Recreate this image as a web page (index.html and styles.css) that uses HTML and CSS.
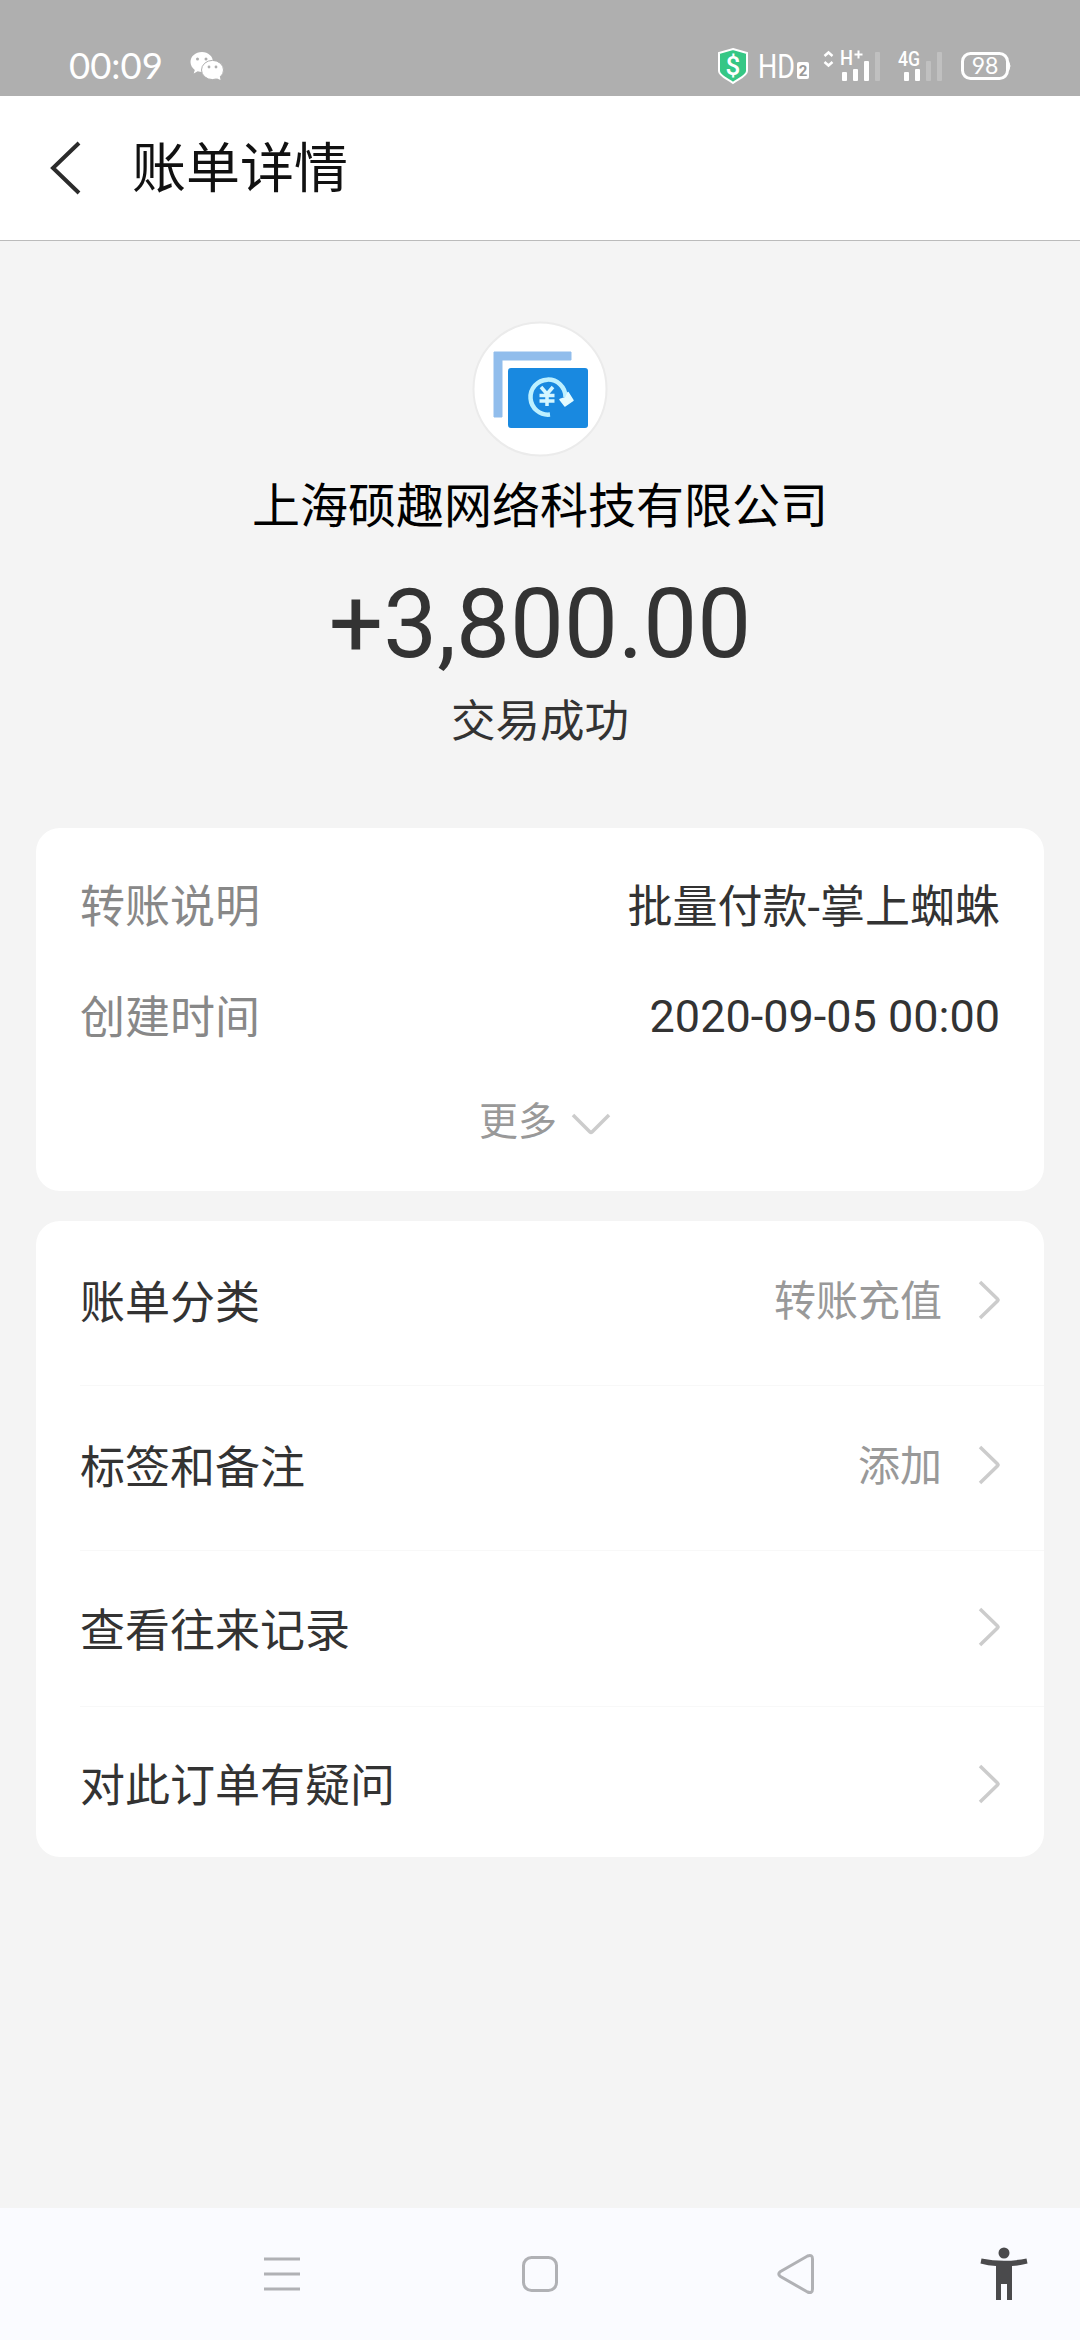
FILE: index.html
```html
<!DOCTYPE html>
<html lang="zh-CN">
<head>
<meta charset="utf-8">
<title>账单详情</title>
<link rel="stylesheet" href="styles.css">
</head>
<body>
<div class="screen">
  <div class="statusbar">
    <span class="clock">00:09</span>
    <svg class="wechat" width="34" height="30" viewBox="0 0 34 30">
      <path fill="#fff" d="M12 1C5.400 1 .5 5.400 .5 11c0 3.200 1.700 6 4.300 7.900L3.700 22.500l4-2.200c1.400.4 2.900.7 4.300.7C18 21 23 16.600 23 11S18.200 1 12 1z"/>
      <ellipse cx="22.500" cy="19" rx="11" ry="9.600" fill="#fff" stroke="#afafaf" stroke-width="1"/>
      <path fill="#fff" d="M26 27l4.500 2-.7-4z"/>
      <g fill="#afafaf"><circle cx="7.500" cy="8" r="1.500"/><circle cx="16" cy="8" r="1.500"/><circle cx="19" cy="16" r="1.400"/><circle cx="26" cy="16" r="1.400"/></g>
    </svg>
    <svg class="indicators" width="300" height="42" viewBox="715 44 300 42">
      <path d="M733 49l14 4v18c0 5-9 8-14 12-5-4-14-7-14-12V53z" fill="#35c785" stroke="#fff" stroke-width="2"/>
      <text class="ind-money" x="733" y="75" text-anchor="middle">$</text>
      <text class="ind-hd" x="758" y="78" textLength="37" lengthAdjust="spacingAndGlyphs">HD</text>
      <rect x="797" y="62" width="12" height="17" rx="2" fill="#fff"/>
      <text class="ind-two" x="803" y="76" text-anchor="middle">2</text>
      <path d="M824.500 56l4-3.500 4 3.500M824.500 62l4 3.500 4-3.500" fill="none" stroke="#fff" stroke-width="2.500"/>
      <text class="ind-net" x="840" y="65" textLength="13" lengthAdjust="spacingAndGlyphs">H</text>
      <path d="M858.500 50.500v8M854.500 54.500h8" stroke="#fff" stroke-width="2"/>
      <g fill="#fff"><rect x="842" y="72" width="5" height="9" rx="1"/><rect x="853" y="69" width="5" height="12" rx="1"/><rect x="864" y="61" width="5" height="20" rx="1"/><rect x="904" y="72" width="5" height="9" rx="1"/><rect x="915" y="69" width="5" height="12" rx="1"/></g>
      <g fill="#c0c0c0"><rect x="875" y="52" width="5" height="29" rx="1"/><rect x="926" y="61" width="5" height="20" rx="1"/><rect x="937" y="52" width="5" height="29" rx="1"/></g>
      <text class="ind-net" x="898" y="66" textLength="22" lengthAdjust="spacingAndGlyphs">4G</text>
      <rect x="962.500" y="53.500" width="45" height="25" rx="8" fill="none" stroke="#fff" stroke-width="3"/>
      <path d="M1008.500 61q3 5 0 10z" fill="#fff" stroke="#fff"/>
      <text class="ind-bat" x="985" y="73.500" text-anchor="middle">98</text>
    </svg>
  </div>
  <div class="header">
    <svg class="back" width="34" height="54" viewBox="0 0 34 54"><path d="M30 2L4 27 30 52" fill="none" stroke="#2b2b2b" stroke-width="4"/></svg>
    <h1 class="title">账单详情</h1>
  </div>
  <div class="content">
    <div class="summary">
      <svg class="logo" width="136" height="136" viewBox="0 0 136 136">
        <circle cx="68" cy="68" r="66.500" fill="#fff" stroke="#ebebeb" stroke-width="2"/>
        <path d="M22 96V31h77v8H30v57z" fill="#91bdec" stroke="#91bdec" stroke-width="1" stroke-linejoin="round"/>
        <rect x="36" y="47" width="80" height="60" rx="3" fill="#1989e0"/>
        <path d="M78 93.500A17.500 17.500 0 1 1 93.500 76" fill="none" stroke="#bdf0ff" stroke-width="4.500"/>
        <path d="M88 78.500l6-2 2-5 5 8-8 5.500z" fill="#e4fbff" stroke="#e4fbff" stroke-width="1.500" stroke-linejoin="round"/>
        <path d="M69 66l6 7 6-7M75 73v12M67.500 74.500h15M67.500 80h15" fill="none" stroke="#d4f6ff" stroke-width="3.500"/>
      </svg>
      <div class="company">上海硕趣网络科技有限公司</div>
      <div class="amount">+3,800.00</div>
      <div class="state">交易成功</div>
    </div>
    <div class="card details">
      <div class="detail"><span class="key">转账说明</span><span class="value">批量付款-掌上蜘蛛</span></div>
      <div class="detail"><span class="key">创建时间</span><span class="value value-time">2020-09-05 00:00</span></div>
      <div class="more"><span>更多</span><svg width="40" height="24" viewBox="0 0 40 24"><path d="M2 3l17 17q1 1 2 0L38 3" fill="none" stroke="#ccc" stroke-width="3.500"/></svg></div>
    </div>
    <div class="card links">
      <div class="link link-first"><span class="label">账单分类</span><span class="extra">转账充值</span><svg class="arrow" width="22" height="40" viewBox="0 0 22 40"><path d="M2 2l17.500 17q1 1 0 2L2 38" fill="none" stroke="#ccc" stroke-width="3.500"/></svg></div>
      <div class="link link-second"><span class="label">标签和备注</span><span class="extra">添加</span><svg class="arrow" width="22" height="40" viewBox="0 0 22 40"><path d="M2 2l17.500 17q1 1 0 2L2 38" fill="none" stroke="#ccc" stroke-width="3.500"/></svg></div>
      <div class="link link-third"><span class="label">查看往来记录</span><svg class="arrow" width="22" height="40" viewBox="0 0 22 40"><path d="M2 2l17.500 17q1 1 0 2L2 38" fill="none" stroke="#ccc" stroke-width="3.500"/></svg></div>
      <div class="link link-last"><span class="label">对此订单有疑问</span><svg class="arrow" width="22" height="40" viewBox="0 0 22 40"><path d="M2 2l17.500 17q1 1 0 2L2 38" fill="none" stroke="#ccc" stroke-width="3.500"/></svg></div>
    </div>
  </div>
  <div class="navbar">
    <svg width="36" height="34" viewBox="0 0 36 34"><path d="M0 2h36M0 17h36M0 32h36" stroke="#b0b1b5" stroke-width="3"/></svg>
    <svg width="36" height="36" viewBox="0 0 36 36"><rect x="1.500" y="1.500" width="33" height="33" rx="8" fill="none" stroke="#b0b1b5" stroke-width="3"/></svg>
    <svg class="triangle" width="38" height="42" viewBox="0 0 38 42"><path d="M3.500 18.500L30.500 3Q35.500 1 35.500 6v30q0 5-5 3L3.500 23.500Q0 21 3.500 18.500z" fill="none" stroke="#b0b1b5" stroke-width="3"/></svg>
    <svg class="person" width="48" height="54" viewBox="0 0 48 54"><circle cx="24" cy="6" r="5.500"/><path d="M1.500 11.500Q24 16 46.500 11.500l1 5Q40 18.500 32 19v34h-5V37h-6v16h-5V19Q8 18.500 .5 16.500z"/></svg>
  </div>
</div>
</body>
</html>
```
FILE: styles.css
```css
* { box-sizing: border-box; }
body {
  margin: 0;
  font-family: Roboto, "Noto Sans CJK SC", sans-serif;
  color: #333;
}
svg { display: block; flex: none; }
.screen {
  width: 1080px;
  height: 2340px;
  display: flex;
  flex-direction: column;
  background: #f4f4f4;
  overflow: hidden;
}
.statusbar {
  height: 96px;
  flex: none;
  display: flex;
  align-items: flex-start;
  padding: 43px 65px 0 69px;
  background: #afafaf;
}
.clock {
  width: 121px;
  font: 36.5px/44px Lato, sans-serif;
  color: #fff;
}
.wechat { margin-top: 8px; }
.indicators { margin: 1px 0 0 auto; }
.indicators text { fill: #fff; font-family: Roboto, sans-serif; }
.indicators .ind-money { font-size: 26px; font-weight: 500; }
.indicators .ind-hd { font-size: 33px; }
.indicators .ind-two { font-size: 15px; font-weight: 700; fill: #999; }
.indicators .ind-net { font-size: 20px; font-weight: 500; }
.indicators .ind-bat { font-family: Lato, sans-serif; font-size: 23px; }
.header {
  height: 145px;
  flex: none;
  display: flex;
  align-items: center;
  padding-left: 49px;
  background: #fff;
  border-bottom: 1px solid #bbb;
}
.title {
  margin: 3px 0 0 49px;
  font-size: 54px;
  line-height: 80px;
  font-weight: 400;
  color: #111;
}
.content {
  flex: 1;
  padding: 80px 36px 0;
}
.summary {
  height: 507px;
  display: flex;
  flex-direction: column;
  align-items: center;
  white-space: nowrap;
}
.company {
  margin-top: 14px;
  font-size: 48px;
  line-height: 72px;
  color: #000;
}
.amount {
  margin-top: 25px;
  font-size: 96px;
  line-height: 112px;
}
.state {
  margin-top: 8px;
  font-size: 44.5px;
  line-height: 68px;
}
.card {
  background: #fff;
  border-radius: 24px;
}
.details {
  height: 363px;
  padding: 20px 44px 0;
  margin-bottom: 30px;
}
.detail {
  height: 111px;
  display: flex;
  justify-content: space-between;
  align-items: center;
  font-size: 45px;
}
.key { color: #888; }
.value-time { margin-top: 4px; }
.more {
  height: 96px;
  display: flex;
  justify-content: center;
  align-items: center;
  gap: 14px;
  padding-left: 10px;
  font-size: 39px;
  color: #999;
}
.more svg { margin-top: 12px; }
.links { height: 636px; padding-left: 44px; }
.link {
  display: flex;
  align-items: center;
  padding-right: 44px;
  border-bottom: 1px solid #f8f8f8;
}
.link-first, .link-second { height: 165px; padding-bottom: 7px; }
.link-third { height: 156px; padding-bottom: 3px; }
.link-last { height: 150px; border-bottom: 0; }
.link-last .arrow { margin-top: 3px; }
.label { font-size: 45px; flex: 1; }
.extra { font-size: 42px; color: #999; margin: -5px 36px 0 0; }
.navbar {
  height: 132px;
  flex: none;
  display: grid;
  grid-template-columns: 36px 36px 38px 48px;
  column-gap: 222px;
  align-items: center;
  padding-left: 264px;
  background: #fafbff;
}
.navbar .triangle { margin-left: -3px; }
.navbar .person { fill: #4a4a4c; margin-left: -60px; }
```
